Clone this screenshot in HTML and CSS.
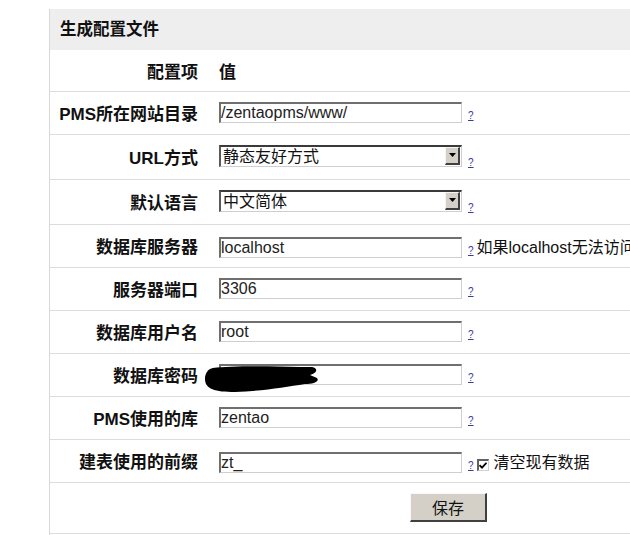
FILE: index.html
```html
<!DOCTYPE html>
<html>
<head>
<meta charset="utf-8">
<link rel="stylesheet" href="styles.css">
</head>
<body>
<div class="panel">
  <div class="caption">生成配置文件</div>
  <table class="form">
    <colgroup><col class="c-label"><col></colgroup>
    <tr class="row-head"><th>配置项</th><td class="vhead">值</td></tr>
    <tr><th>PMS所在网站目录</th><td><input class="text" value="/zentaopms/www/"><a class="help">?</a></td></tr>
    <tr class="row-sel"><th>URL方式</th><td><span class="select"><span class="sel-text">静态友好方式</span><span class="sel-btn"><svg width="7" height="4" viewBox="0 0 7 4"><path d="M0 0H7L3.5 4Z" fill="#000"/></svg></span></span><a class="help">?</a></td></tr>
    <tr class="row-sel"><th>默认语言</th><td><span class="select"><span class="sel-text">中文简体</span><span class="sel-btn"><svg width="7" height="4" viewBox="0 0 7 4"><path d="M0 0H7L3.5 4Z" fill="#000"/></svg></span></span><a class="help">?</a></td></tr>
    <tr><th>数据库服务器</th><td class="nowrap"><input class="text" value="localhost"><a class="help">?</a><span class="note">如果localhost无法访问</span></td></tr>
    <tr><th>服务器端口</th><td><input class="text" value="3306"><a class="help">?</a></td></tr>
    <tr><th>数据库用户名</th><td><input class="text" value="root"><a class="help">?</a></td></tr>
    <tr><th>数据库密码</th><td><span class="pw"><input class="text" value=""><svg class="blot" width="114" height="26" viewBox="0 0 114 26"><path d="M8 2C24 0 60 0 95 1L107 1C113 2 113 7 105 9L112 12C115 16 108 18 100 18C80 21 58 25 30 26C10 26 0 23 0 13C0 7 3 3 8 2Z" fill="#000"/></svg></span><a class="help">?</a></td></tr>
    <tr><th>PMS使用的库</th><td><input class="text" value="zentao"><a class="help">?</a></td></tr>
    <tr><th>建表使用的前缀</th><td class="nowrap"><input class="text" value="zt_"><a class="help">?</a><span class="check"><svg width="8" height="7" viewBox="0 0 8 7"><path d="M0.5 3.2L3 5.7L7.5 0.8" stroke="#000" stroke-width="1.8" fill="none"/></svg></span><span class="check-label">清空现有数据</span></td></tr>
    <tr class="row-btn"><td colspan="2" class="btn-cell"><button class="save">保存</button></td></tr>
  </table>
</div>
</body>
</html>
```

FILE: styles.css
```css
html, body {
  margin: 0;
  padding: 0;
  overflow: hidden;
  background: #fff;
}
body {
  font-family: "Liberation Sans", "Noto Sans CJK SC", sans-serif;
  font-size: 16px;
  color: #111;
  padding: 9px 0 0 49px;
}
.panel {
  width: 797px;
  border-left: 1px solid #d8d8d8;
  padding-bottom: 20px;
}
.caption {
  height: 41px;
  line-height: 41px;
  background: #eeeeee;
  padding-left: 10px;
  font-weight: bold;
  font-size: 16.5px;
}
.form {
  width: 100%;
  border-collapse: collapse;
  table-layout: fixed;
}
.c-label { width: 158px; }
.form tr {
  height: 43px;
  border-bottom: 1px solid #dddddd;
}
.form tr.row-head { height: 41px; }
.form tr.row-sel { height: 45px; }
.form tr.row-btn { height: 51px; }
.form th {
  text-align: right;
  padding: 0 10px 0 0;
  font-weight: bold;
  font-size: 17px;
  white-space: nowrap;
}
.form td {
  padding: 0 0 0 11px;
  white-space: nowrap;
}
.vhead { font-weight: bold; font-size: 17px; }
.text {
  box-sizing: border-box;
  width: 243px;
  height: 21px;
  padding: 0;
  margin: 0;
  font-family: "Liberation Sans", "Noto Sans CJK SC", sans-serif;
  font-size: 16px;
  color: #222;
  border-style: solid;
  border-width: 2px 1px 1px 2px;
  border-color: #6f6f6f #cfcfcf #cfcfcf #6f6f6f;
  background: #fff;
  vertical-align: baseline;
  outline: none;
}
.help {
  font-size: 10px;
  color: #3a3a9a;
  text-decoration: underline;
  margin-left: 6px;
  vertical-align: -1px;
}
.select {
  position: relative;
  display: inline-block;
  box-sizing: border-box;
  width: 243px;
  height: 22px;
  border-style: solid;
  border-width: 2px 1px 1px 2px;
  border-color: #3a3a3a #cfcfcf #cfcfcf #5a5a5a;
  background: #fff;
  vertical-align: middle;
}
.sel-text {
  display: block;
  line-height: 19px;
  padding-left: 2px;
  font-size: 16px;
  color: #111;
}
.sel-btn {
  position: absolute;
  right: 1px;
  top: 0;
  box-sizing: border-box;
  width: 15px;
  height: 18px;
  background: #d4d0c8;
  border-style: solid;
  border-width: 1px 2px 2px 1px;
  border-color: #f4f4f4 #404040 #404040 #f4f4f4;
  display: flex;
  align-items: center;
  justify-content: center;
}
.row-sel .help { vertical-align: -6px; }
.note {
  font-size: 16px;
  margin-left: 3px;
}
.pw {
  position: relative;
  display: inline-block;
}
.blot {
  position: absolute;
  left: -14px;
  top: 2px;
}
.check {
  display: inline-flex;
  align-items: center;
  justify-content: center;
  box-sizing: border-box;
  width: 12px;
  height: 12px;
  margin-left: 3px;
  border-style: solid;
  border-width: 2px 1px 1px 2px;
  border-color: #606060 #d0d0d0 #d0d0d0 #606060;
  background: #fff;
  vertical-align: -1px;
}
.check-label {
  margin-left: 5px;
  font-size: 16px;
}
.btn-cell {
  text-align: center;
}
.form td.btn-cell { padding: 0; }
.save {
  box-sizing: border-box;
  width: 77px;
  height: 29px;
  margin: 0;
  padding: 0;
  font-family: "Noto Sans CJK SC", sans-serif;
  font-size: 16px;
  color: #111;
  background: #d4d0c8;
  border-style: solid;
  border-width: 1px 2px 2px 1px;
  border-color: #f8f8f8 #404040 #404040 #f8f8f8;
}
```
